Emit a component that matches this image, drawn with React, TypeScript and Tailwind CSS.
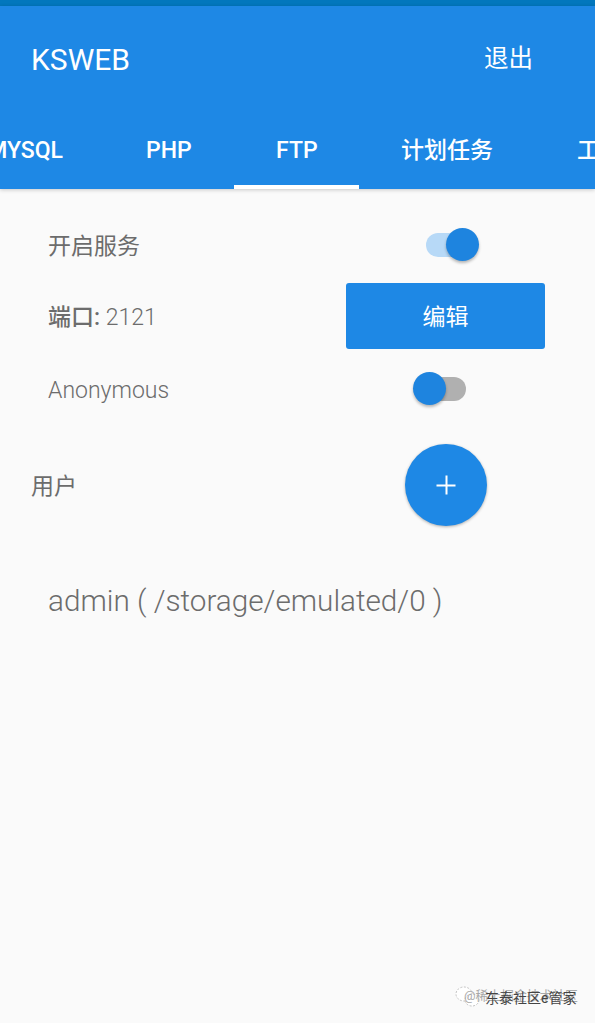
import React from "react";
import clsx from "clsx";

const tabs = [
  { label: "MYSQL", width: "w-[162px]" },
  { label: "PHP", width: "w-[130px]" },
  { label: "FTP", width: "w-[125px]", active: true },
  { label: "计划任务", width: "w-[176px]" },
  { label: "工具", width: "w-[130px]" },
];

function Switch({ on = false }: { on?: boolean }) {
  return (
    <div role="switch" aria-checked={on} className="relative w-[66px] h-[34px] flex items-center justify-center">
      <span className={clsx("w-10 h-6 rounded-full", on ? "bg-[#b7d9f7]" : "bg-[#b0b0b0]")} />
      <span
        className={clsx(
          "absolute top-0 w-[33px] h-[33px] rounded-full bg-[#1e84df] shadow-[0_2px_3px_rgba(0,0,0,0.28)]",
          on ? "right-0" : "left-0"
        )}
      />
    </div>
  );
}

function Row({ label, className, children }: { label: React.ReactNode; className: string; children: React.ReactNode }) {
  return (
    <div className={clsx("flex items-center justify-between pr-[50px]", className)}>
      <div className="pt-[3px] whitespace-nowrap">{label}</div>
      <div className="w-[199px] flex justify-center">{children}</div>
    </div>
  );
}

export default function App() {
  return (
    <div className="relative w-[595px] h-[1023px] overflow-hidden flex flex-col bg-[#fafafa] text-[#6c6c6c] font-[Roboto,'Noto_Sans_CJK_SC',sans-serif]">
      <div className="h-1.5 shrink-0 bg-[#0277bd]" />
      <header className="h-[183px] shrink-0 bg-[#1e88e5] text-white flex flex-col shadow-[0_1px_4px_rgba(0,0,0,0.2)]">
        <div className="h-[105px] flex items-center justify-between pt-0.5 pl-[31px] pr-[62px]">
          <h1 className="text-[30px] leading-none">KSWEB</h1>
          <button className="text-[24.5px] leading-none">退出</button>
        </div>
        <nav className="h-[78px] flex -ml-[58px]">
          {tabs.map((tab) => (
            <div
              key={tab.label}
              className={clsx(
                "shrink-0 h-full flex items-center pt-1.5 border-b-4 text-[23px] font-medium whitespace-nowrap",
                tab.width,
                tab.label === "MYSQL" ? "justify-end pr-[41px]" : "px-[42px]",
                tab.active ? "border-white" : "border-transparent"
              )}
            >
              {tab.label}
            </div>
          ))}
        </nav>
      </header>

      <main className="flex flex-col pt-5 text-[23px] leading-none font-light">
        <Row className="h-[71px] pl-12" label={<span className="font-normal">开启服务</span>}>
          <Switch on />
        </Row>
        <Row
          className="h-[72px] pl-12"
          label={
            <>
              <span className="font-medium">端口:</span> 2121
            </>
          }
        >
          <button className="w-full h-[66px] pt-0.5 rounded-[3px] bg-[#1e88e5] text-white font-normal">编辑</button>
        </Row>
        <Row className="h-[73px] pl-12" label="Anonymous">
          <Switch />
        </Row>
        <Row className="h-[119px] pl-[31px]" label={<span className="font-normal">用户</span>}>
          <button className="w-[82px] h-[82px] rounded-full bg-[#1e88e5] flex items-center justify-center shadow-[0_1px_3px_rgba(0,0,0,0.3)]">
            <svg viewBox="0 0 20 20" className="w-5 h-5" stroke="white" strokeWidth="2">
              <path d="M10.5 0.5V19.5M0.5 10.5H19.5" />
            </svg>
          </button>
        </Row>
        <p className="h-[112px] pl-12 pt-0.5 flex items-center text-[29.7px] whitespace-pre">admin ( /storage/emulated/0 )</p>
      </main>

      <div className="absolute left-[455px] top-[986px] w-[125px] h-6">
        <svg viewBox="0 0 26 22" className="absolute left-0 top-0 w-[26px] h-[22px]" fill="white" stroke="#b4b4b4" strokeWidth="0.8" strokeDasharray="2 1.5">
          <ellipse cx="9" cy="8" rx="8" ry="7" />
          <ellipse cx="17" cy="14" rx="7" ry="6" />
        </svg>
        <span className="absolute left-[9px] top-1 text-[12.8px] leading-none text-[#a8a8a8] whitespace-nowrap">@稀土掘金技术社区</span>
        <span className="absolute left-[30px] top-[5px] text-[14px] leading-none text-[#444] whitespace-nowrap">东泰社区e管家</span>
      </div>
    </div>
  );
}
